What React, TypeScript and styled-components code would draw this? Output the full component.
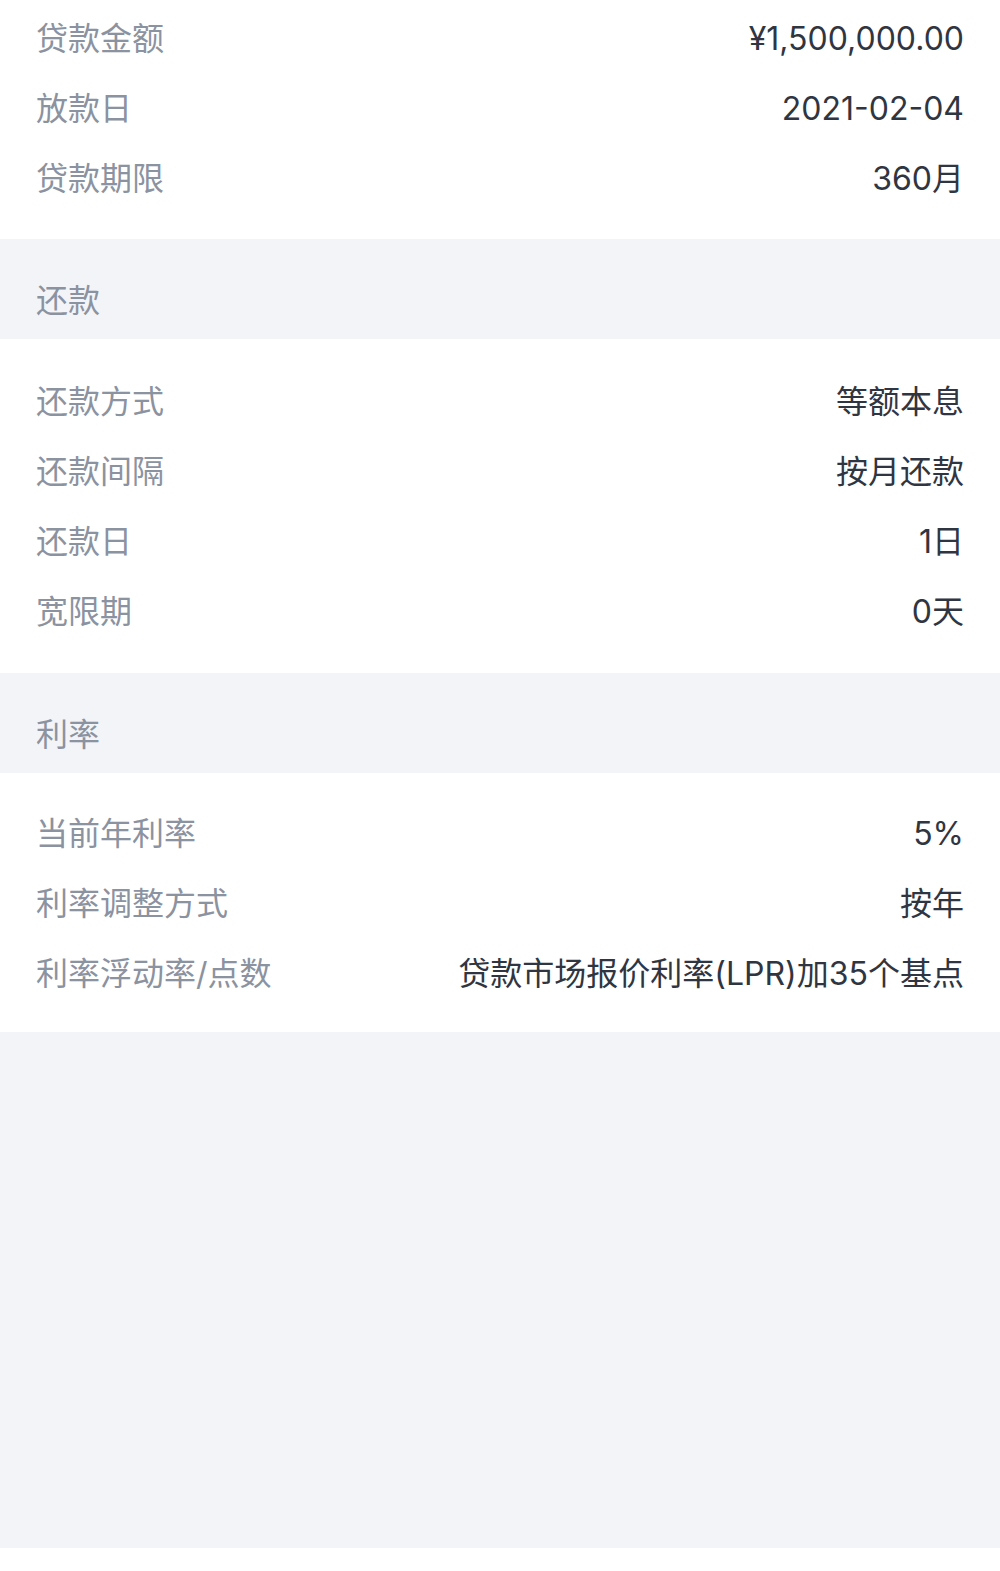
import * as React from 'react'
import styled, { createGlobalStyle } from 'styled-components'

const GlobalStyle = createGlobalStyle`
  html, body {
    margin: 0;
    padding: 0;
    background: #ffffff;
  }
  body {
    font-family: Inter, "Noto Sans CJK SC", "Noto Sans", sans-serif;
    -webkit-font-smoothing: antialiased;
  }
`

const Page = styled.div`
  width: 1000px;
  min-height: 1548px;
  background: #f3f4f8;
  display: flex;
  flex-direction: column;
`

const Card = styled.div<{ top: number; bottom: number }>`
  background: #ffffff;
  padding: ${p => p.top}px 36px ${p => p.bottom}px 36px;
  display: flex;
  flex-direction: column;
`

const Row = styled.div`
  height: 70px;
  display: flex;
  align-items: center;
  justify-content: space-between;
  font-size: 32px;
  line-height: 32px;
`

const Label = styled.span`
  color: #8b92a0;
`

const Value = styled.span`
  color: #303641;
  text-align: right;
`

const SectionTitle = styled.div`
  height: 100px;
  box-sizing: border-box;
  padding: 0 36px 22px;
  display: flex;
  align-items: flex-end;
  font-size: 32px;
  line-height: 32px;
  color: #8b92a0;
`

interface Item {
  label: string;
  value: string;
}

const loan: Item[] = [
  { label: '贷款金额', value: '¥1,500,000.00' },
  { label: '放款日', value: '2021-02-04' },
  { label: '贷款期限', value: '360月' },
]

const repay: Item[] = [
  { label: '还款方式', value: '等额本息' },
  { label: '还款间隔', value: '按月还款' },
  { label: '还款日', value: '1日' },
  { label: '宽限期', value: '0天' },
]

const rate: Item[] = [
  { label: '当前年利率', value: '5%' },
  { label: '利率调整方式', value: '按年' },
  { label: '利率浮动率/点数', value: '贷款市场报价利率(LPR)加35个基点' },
]

const Rows: React.FC<{ items: Item[] }> = ({ items }) => (
  <>
    {items.map(item => (
      <Row key={item.label}>
        <Label>{item.label}</Label>
        <Value>{item.value}</Value>
      </Row>
    ))}
  </>
)

const App: React.FC = () => {
  return (
    <Page>
      <GlobalStyle />
      <Card top={4} bottom={25}>
        <Rows items={loan} />
      </Card>
      <SectionTitle>还款</SectionTitle>
      <Card top={28} bottom={26}>
        <Rows items={repay} />
      </Card>
      <SectionTitle>利率</SectionTitle>
      <Card top={26} bottom={23}>
        <Rows items={rate} />
      </Card>
    </Page>
  )
}

export default App
